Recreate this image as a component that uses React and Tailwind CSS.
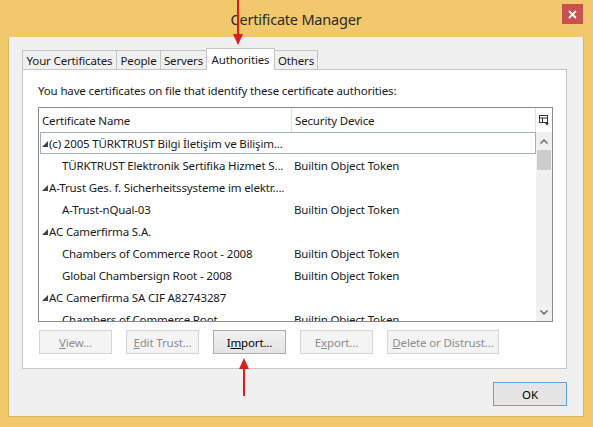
import React from "react";

const BOT = "Builtin Object Token";
const rows = [
  { level: 0, name: "(c) 2005 TÜRKTRUST Bilgi İletişim ve Bilişim...", device: "", focus: true },
  { level: 1, name: "TÜRKTRUST Elektronik Sertifika Hizmet S...", device: BOT },
  { level: 0, name: "A-Trust Ges. f. Sicherheitssysteme im elektr....", device: "" },
  { level: 1, name: "A-Trust-nQual-03", device: BOT },
  { level: 0, name: "AC Camerfirma S.A.", device: "" },
  { level: 1, name: "Chambers of Commerce Root - 2008", device: BOT },
  { level: 1, name: "Global Chambersign Root - 2008", device: BOT },
  { level: 0, name: "AC Camerfirma SA CIF A82743287", device: "" },
  { level: 1, name: "Chambers of Commerce Root", device: BOT },
];

function Twisty() {
  return (
    <svg width="6" height="6" viewBox="0 0 6 6" className="shrink-0">
      <polygon points="6,0 6,6 0,6" fill="#444" />
    </svg>
  );
}

function Row({ r }) {
  return (
    <div className="relative flex h-[22px] items-center pt-[2px]">
      {r.focus && (
        <div className="absolute left-[1px] top-0 h-[22px] w-[496px] border border-[#9fb0c0]" />
      )}
      <div className="flex w-[253px] items-center overflow-hidden whitespace-nowrap">
        {r.level === 0 ? (
          <div className="flex items-center pl-[3px]">
            <Twisty />
            <span className="ml-[1px]">{r.name}</span>
          </div>
        ) : (
          <span className="pl-[23px]">{r.name}</span>
        )}
      </div>
      <div className="pl-[2px] whitespace-nowrap">{r.device}</div>
    </div>
  );
}

function Btn({ children, enabled, w = "w-[73px]" }) {
  return (
    <div
      className={
        "flex h-[24px] items-center justify-center border pt-[1px] " +
        w +
        " " +
        (enabled
          ? "border-[#adadad] bg-gradient-to-b from-[#f2f2f2] to-[#e3e3e3] text-[#000]"
          : "border-[#d5d5d5] bg-[#f4f4f4] text-[#8d8d8d]")
      }
    >
      {children}
    </div>
  );
}

export default function App() {
  return (
    <div
      className="relative flex h-[427px] w-[593px] flex-col bg-[#f1c96c] pb-[10px] pl-[8px] pr-[9px] text-[11.5px] tracking-[-0.15px] text-[#1a1a1a]"
      style={{ fontFamily: '"Noto Sans", "Open Sans", sans-serif' }}
    >
      {/* title bar */}
      <div className="relative flex h-[37px] items-center justify-center pt-[2px]">
        <span className="text-[14.5px] tracking-[-0.2px] text-[#2a2a2a]">Certificate Manager</span>
        <div className="absolute right-[1px] top-[4px] flex h-[20px] w-[21px] items-center justify-center bg-[#c75050]">
          <svg width="9" height="9" viewBox="0 0 9 9">
            <path d="M1 1 L8 8 M8 1 L1 8" stroke="#fff" strokeWidth="1.8" />
          </svg>
        </div>
      </div>

      {/* body */}
      <div className="flex flex-1 flex-col border border-t-0 border-[#d9b65e] bg-[#f0f0f0] pl-[13px] pr-[16px] pt-[11px]">
        {/* tabs */}
        <div className="flex h-[21px] items-end">
          <div className="flex h-[19px] w-[95px] items-center justify-center border border-b-0 border-[#c6c6c6] bg-[#f0f0f0] pt-[1px]">Your Certificates</div>
          <div className="-ml-px flex h-[19px] w-[45px] items-center justify-center border border-b-0 border-[#c6c6c6] bg-[#f0f0f0] pt-[1px]">People</div>
          <div className="-ml-px flex h-[19px] w-[47px] items-center justify-center border border-b-0 border-[#c6c6c6] bg-[#f0f0f0] pt-[1px]">Servers</div>
          <div className="relative z-10 -mb-px -ml-px flex h-[22px] w-[69px] items-start justify-center border border-b-0 border-[#c6c6c6] bg-white pt-[2px]">Authorities</div>
          <div className="-ml-px flex h-[19px] w-[44px] items-center justify-center border border-b-0 border-[#c6c6c6] bg-[#f0f0f0] pt-[1px]">Others</div>
        </div>

        {/* panel */}
        <div className="flex h-[300px] flex-col border border-[#c6c6c6] bg-white pl-[15px] pr-[13px]">
          <div className="mt-[12px] h-[18px] leading-[18px]">
            You have certificates on file that identify these certificate authorities:
          </div>
          <div className="mt-[7px] flex h-[215px] flex-col border border-[#8a8a8a]">
            {/* header */}
            <div className="flex h-[24px] items-center">
              <div className="flex h-full w-[253px] items-center border-r border-[#e3e3e3] pl-[3px] pt-[2px]">Certificate Name</div>
              <div className="flex h-full w-[244px] items-center border-r border-[#e3e3e3] pl-[3px] pt-[2px]">Security Device</div>
              <div className="flex h-full flex-1 items-center justify-center">
                <svg width="11" height="11" viewBox="0 0 11 11">
                  <rect x="0.5" y="0.5" width="8" height="7" fill="none" stroke="#333" />
                  <path d="M0.5 3 H8.5 M3.5 3 V7.5" stroke="#333" />
                  <polygon points="6,8 10,8 8,10.5" fill="#333" />
                </svg>
              </div>
            </div>
            {/* rows + scrollbar */}
            <div className="flex flex-1 overflow-hidden">
              <div className="flex-1 overflow-hidden">
                {rows.map((r, i) => (
                  <Row key={i} r={r} />
                ))}
              </div>
              <div className="flex w-[16px] flex-col bg-[#f0f0f0]">
                <div className="flex h-[18px] items-center justify-center">
                  <svg width="8" height="5" viewBox="0 0 8 5">
                    <path d="M0.5 4.5 L4 1 L7.5 4.5" fill="none" stroke="#606060" strokeWidth="1.4" />
                  </svg>
                </div>
                <div className="mx-[1px] h-[20px] bg-[#cdcdcd]" />
                <div className="flex-1" />
                <div className="flex h-[18px] items-center justify-center">
                  <svg width="8" height="5" viewBox="0 0 8 5">
                    <path d="M0.5 0.5 L4 4 L7.5 0.5" fill="none" stroke="#606060" strokeWidth="1.4" />
                  </svg>
                </div>
              </div>
            </div>
          </div>
          {/* buttons */}
          <div className="ml-[1px] mt-[8px] flex gap-[14px]">
            <Btn><span><u>V</u>iew...</span></Btn>
            <Btn><span><u>E</u>dit Trust...</span></Btn>
            <Btn enabled><span>I<u>m</u>port...</span></Btn>
            <Btn><span>E<u>x</u>port...</span></Btn>
            <Btn w="w-[112px]"><span><u>D</u>elete or Distrust...</span></Btn>
          </div>
        </div>

        {/* OK */}
        <div className="mt-[13px] flex justify-end">
          <div className="flex h-[24px] w-[74px] items-center justify-center border border-[#5fa2dd] bg-[#e5e5e5] pt-[1px] text-[#000]">
            OK
          </div>
        </div>
      </div>

      {/* annotation arrows */}
      <svg className="pointer-events-none absolute left-0 top-0" width="593" height="427">
        <line x1="238" y1="0" x2="238" y2="36" stroke="#e01b1b" strokeWidth="2" />
        <polygon points="233,34 243,34 238,45" fill="#e01b1b" />
        <line x1="244" y1="396" x2="244" y2="367" stroke="#e01b1b" strokeWidth="2" />
        <polygon points="239,369 249,369 244,358" fill="#e01b1b" />
      </svg>
    </div>
  );
}
